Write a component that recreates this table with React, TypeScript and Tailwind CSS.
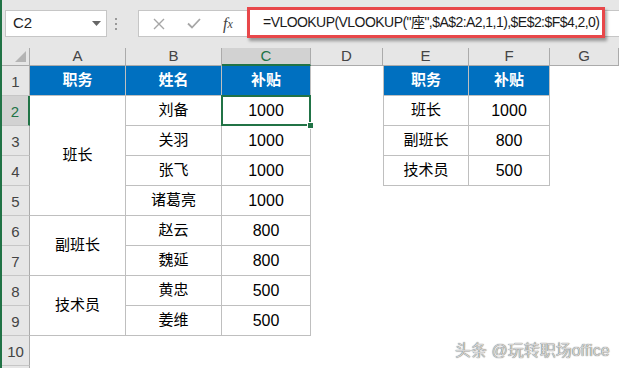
import React from 'react';

const names = ['刘备', '关羽', '张飞', '诸葛亮', '赵云', '魏延', '黄忠', '姜维'];
const amounts = [1000, 1000, 1000, 1000, 800, 800, 500, 500];
const groups: Record<number, { label: string; span: string }> = {
  2: { label: '班长', span: 'row-span-4' },
  6: { label: '副班长', span: 'row-span-2' },
  8: { label: '技术员', span: 'row-span-2' },
};
const lookup = [
  ['班长', 1000],
  ['副班长', 800],
  ['技术员', 500],
];

const cell = 'flex items-center justify-center border-r border-b border-[#bfbfbf]';
const blue = 'bg-[#0070c0] text-white font-bold text-[15px]';

function Toolbar() {
  return (
    <div className="h-[48px] bg-[#e6e6e6] flex items-start pt-[10px]">
      {/* name box */}
      <div className="ml-[3px] w-[102px] h-[27px] bg-white border border-[#c6c6c6] flex items-center pl-[7px] pr-[5px]">
        <span className="text-[15px] text-[#222] flex-1">C2</span>
        <svg width="9" height="5" viewBox="0 0 9 5">
          <path d="M0 0h9L4.5 5z" fill="#666" />
        </svg>
      </div>
      <div className="w-[15px] h-[27px] flex flex-col items-center justify-center gap-[3px] ml-[1px]">
        <span className="w-[2px] h-[2px] bg-[#999]" />
        <span className="w-[2px] h-[2px] bg-[#999]" />
        <span className="w-[2px] h-[2px] bg-[#999]" />
      </div>
      {/* formula bar */}
      <div className="ml-[15px] flex-1 h-[27px] bg-white border border-[#c6c6c6] border-r-0 flex items-start">
        <div className="w-[40px] h-full flex items-center justify-center">
          <svg width="12" height="12" viewBox="0 0 12 12">
            <path d="M1 1l10 10M11 1L1 11" stroke="#a6a6a6" strokeWidth="1.4" />
          </svg>
        </div>
        <div className="w-[30px] h-full flex items-center justify-center">
          <svg width="14" height="11" viewBox="0 0 14 11">
            <path d="M1 5.5l4 4L13 1" stroke="#a6a6a6" strokeWidth="1.8" fill="none" />
          </svg>
        </div>
        <div className="w-[38px] h-full flex items-center justify-center font-['Liberation_Serif',serif] italic text-[16px] text-[#444]">
          f<span className="text-[12px]">x</span>
        </div>
        <div className="-mt-[4px] w-[358px] h-[31px] border-[3px] border-[#e8474a] bg-white pl-[13px] flex items-center shadow-[2px_3px_3px_rgba(0,0,0,0.35)] text-[14px] tracking-[-0.55px] text-[#1a1a1a] whitespace-nowrap">
          =VLOOKUP(VLOOKUP("座",$A$2:A2,1,1),$E$2:$F$4,2,0)
        </div>
      </div>
    </div>
  );
}

function RowHeader({ n, label = true }: { n: number; label?: boolean }) {
  const active = n === 2;
  return (
    <div
      className={`flex items-end justify-center pb-[2px] text-[15px] border-b border-b-[#c6c6c6] ${
        active
          ? 'bg-[#d2d2d2] text-[#217346] border-r-2 border-r-[#217346]'
          : 'bg-[#e6e6e6] text-[#444] border-r border-r-[#ababab]'
      }`}
    >
      {label ? n : null}
    </div>
  );
}

export default function App() {
  return (
    <div className="relative w-[619px] h-[368px] overflow-hidden bg-white border-l-2 border-[#217346] font-['Liberation_Sans','Noto_Sans_CJK_SC',sans-serif]">
      <Toolbar />
      <div className="grid grid-cols-[28px_96px_96px_89px_72px_86px_81px_1fr] grid-rows-[18px_repeat(11,30px)]">
        {/* column headers */}
        <div className="relative bg-[#e6e6e6] border-r border-b border-[#ababab]">
          <svg className="absolute right-[3px] bottom-[3px]" width="11" height="11" viewBox="0 0 11 11">
            <path d="M11 0v11H0z" fill="#b4b4b4" />
          </svg>
        </div>
        {['A', 'B', 'C', 'D', 'E', 'F', 'G'].map((c) =>
          c === 'C' ? (
            <div
              key={c}
              className="flex items-center justify-center bg-[#d2d2d2] text-[#217346] text-[15px] border-r border-r-[#ababab] border-b-2 border-b-[#217346]"
            >
              {c}
            </div>
          ) : (
            <div
              key={c}
              className="flex items-center justify-center bg-[#e6e6e6] text-[#444] text-[15px] border-r border-b border-[#ababab]"
            >
              {c}
            </div>
          )
        )}

        {/* row 1 */}
        <RowHeader n={1} />
        <div className={`${cell} ${blue}`}>职务</div>
        <div className={`${cell} ${blue}`}>姓名</div>
        <div className={`${cell} ${blue}`}>补贴</div>
        <div />
        <div className={`${cell} ${blue} border-l`}>职务</div>
        <div className={`${cell} ${blue}`}>补贴</div>
        <div />

        {/* rows 2-9 */}
        {names.map((name, i) => {
          const r = i + 2;
          const g = groups[r];
          const lk = lookup[i];
          return (
            <React.Fragment key={r}>
              <RowHeader n={r} />
              {g && <div className={`${cell} ${g.span} text-[15px] text-black`}>{g.label}</div>}
              <div className={`${cell} text-[15px] text-black`}>{name}</div>
              <div className={`${cell} relative text-[16px] text-black`}>
                {amounts[i]}
                {r === 2 && (
                  <div className="absolute left-[-1px] top-[-1px] right-[-1px] bottom-[-1px] border-2 border-[#217346] z-10">
                    <span className="absolute right-[-5px] bottom-[-5px] w-[7px] h-[7px] bg-[#217346] border border-white" />
                  </div>
                )}
              </div>
              <div />
              {lk ? (
                <>
                  <div className={`${cell} border-l text-[15px] text-black`}>{lk[0]}</div>
                  <div className={`${cell} text-[16px] text-black`}>{lk[1]}</div>
                </>
              ) : (
                <>
                  <div />
                  <div />
                </>
              )}
              <div />
            </React.Fragment>
          );
        })}

        {/* rows 10-11 */}
        <RowHeader n={10} />
        <div className="col-span-7" />
        <RowHeader n={11} label={false} />
        <div className="col-span-7" />
      </div>

      <div className="absolute left-[453px] top-[339px] text-[16px] text-[#d4d4d4] [text-shadow:0_0_1px_#333] whitespace-nowrap">
        头条 @玩转职场office
      </div>
    </div>
  );
}
